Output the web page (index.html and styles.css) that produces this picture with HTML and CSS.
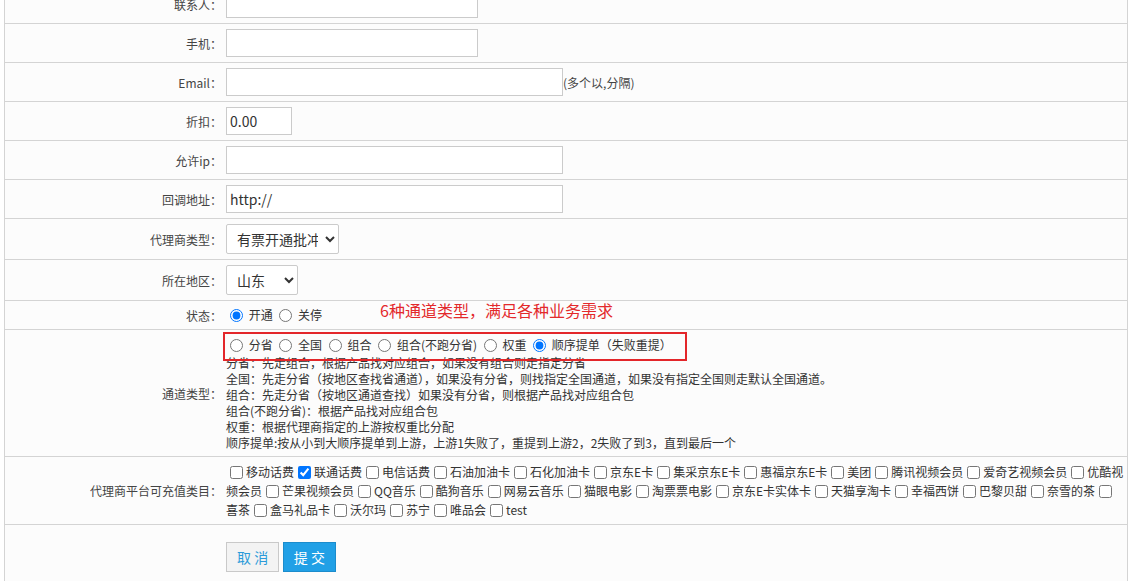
FILE: index.html
```html
<!DOCTYPE html>
<html lang="zh-CN">
<head>
  <meta charset="UTF-8" />
  <title>代理商编辑</title>
  <meta name="viewport" content="width=device-width, initial-scale=1" />
  <link rel="stylesheet" href="styles.css">
</head>
<body>

  <table class="form-table">
    <tr>
      <td class="label">联系人：</td>
      <td><input type="text" class="ipt ipt-md" /></td>
    </tr>
    <tr>
      <td class="label">手机：</td>
      <td><input type="text" class="ipt ipt-md" /></td>
    </tr>
    <tr>
      <td class="label">Email：</td>
      <td><input type="text" class="ipt ipt-lg" /><span class="tip">(多个以,分隔)</span></td>
    </tr>
    <tr>
      <td class="label">折扣：</td>
      <td><input type="text" class="ipt ipt-sm" value="0.00" /></td>
    </tr>
    <tr>
      <td class="label">允许ip：</td>
      <td><input type="text" class="ipt ipt-lg" /></td>
    </tr>
    <tr>
      <td class="label">回调地址：</td>
      <td><input type="text" class="ipt ipt-lg" value="http://" /></td>
    </tr>
    <tr>
      <td class="label">代理商类型：</td>
      <td>
        <select class="sel sel-type">
          <option>有票开通批冲</option>
          <option>无票</option>
        </select>
      </td>
    </tr>
    <tr>
      <td class="label">所在地区：</td>
      <td>
        <select class="sel sel-area">
          <option>山东</option>
          <option>北京</option>
        </select>
      </td>
    </tr>
    <tr>
      <td class="label">状态：</td>
      <td>
        <div class="status">
          <label><input type="radio" name="status" checked /> 开通</label>
          <label><input type="radio" name="status" /> 关停</label>
          <!-- 标注 -->
          <span class="note">6种通道类型，满足各种业务需求</span>
        </div>
      </td>
    </tr>
    <tr>
      <td class="label">通道类型：</td>
      <td>
        <div class="channel">
          <div class="channel-opts">
            <label><input type="radio" name="channel" /> 分省</label>
            <label><input type="radio" name="channel" /> 全国</label>
            <label><input type="radio" name="channel" /> 组合</label>
            <label><input type="radio" name="channel" /> 组合(不跑分省)</label>
            <label><input type="radio" name="channel" /> 权重</label>
            <label><input type="radio" name="channel" checked /> 顺序提单（失败重提）</label>
          </div>
          <div class="channel-desc">
            分省：先走组合，根据产品找对应组合，如果没有组合则走指定分省<br />
            全国：先走分省（按地区查找省通道），如果没有分省，则找指定全国通道，如果没有指定全国则走默认全国通道。<br />
            组合：先走分省（按地区通道查找）如果没有分省，则根据产品找对应组合包<br />
            组合(不跑分省)：根据产品找对应组合包<br />
            权重：根据代理商指定的上游按权重比分配<br />
            顺序提单:按从小到大顺序提单到上游，上游1失败了，重提到上游2，2失败了到3，直到最后一个
          </div>
          <div class="mark-box"></div>
        </div>
      </td>
    </tr>
    <tr>
      <td class="label">代理商平台可充值类目：</td>
      <td>
        <div class="cats"><input type="checkbox" />移动话费<input type="checkbox" checked />联通话费<input type="checkbox" />电信话费<input type="checkbox" />石油加油卡<input type="checkbox" />石化加油卡<input type="checkbox" />京东E卡<input type="checkbox" />集采京东E卡<input type="checkbox" />惠福京东E卡<input type="checkbox" />美团<input type="checkbox" />腾讯视频会员<input type="checkbox" />爱奇艺视频会员<input type="checkbox" />优酷视频会员<input type="checkbox" />芒果视频会员<input type="checkbox" />QQ音乐<input type="checkbox" />酷狗音乐<input type="checkbox" />网易云音乐<input type="checkbox" />猫眼电影<input type="checkbox" />淘票票电影<input type="checkbox" />京东E卡实体卡<input type="checkbox" />天猫享淘卡<input type="checkbox" />幸福西饼<input type="checkbox" />巴黎贝甜<input type="checkbox" />奈雪的茶<input type="checkbox" />喜茶<input type="checkbox" />盒马礼品卡<input type="checkbox" />沃尔玛<input type="checkbox" />苏宁<input type="checkbox" />唯品会<input type="checkbox" />test</div>
      </td>
    </tr>
    <tr>
      <td class="label"></td>
      <td class="actions">
        <button type="button" class="btn btn-cancel">取 消</button>
        <button type="submit" class="btn btn-submit">提 交</button>
      </td>
    </tr>
  </table>

</body>
</html>
```

FILE: styles.css
```css
body {
  margin: 0;
  background: #fff;
  font-family: "Noto Sans CJK SC", "Microsoft YaHei", sans-serif;
  font-size: 12px;
  color: #333;
}
.form-table {
  margin: -16px 0 0 4px;
  width: 1124px;
  border-collapse: collapse;
  border: 1px solid #d4d4d4;
  background: #fcfcfc;
}
.form-table td {
  border-bottom: 1px solid #d4d4d4;
  padding: 5px 0 5px 4px;
  vertical-align: middle;
}
.form-table td.label {
  width: 217px;
  padding: 5px 0;
  text-align: right;
  color: #444;
}
.ipt {
  box-sizing: border-box;
  height: 28px;
  border: 1px solid #cbcbcb;
  background: #fff;
  padding: 0 3px;
  font-family: "Noto Sans CJK SC", sans-serif;
  font-size: 14px;
  color: #333;
  vertical-align: middle;
  outline: none;
}
.ipt-sm { width: 66px; }
.ipt-md { width: 252px; }
.ipt-lg { width: 337px; }
.tip {
  vertical-align: middle;
  color: #444;
}
.sel {
  box-sizing: border-box;
  height: 30px;
  border: 1px solid #cbcbcb;
  border-radius: 2px;
  background: #fff;
  padding: 0 4px 0 6px;
  font-family: "Noto Sans CJK SC", sans-serif;
  font-size: 14px;
  color: #333;
}
.sel-type { width: 113px; }
.sel-area { width: 72px; }

input[type="radio"],
input[type="checkbox"] {
  width: 13px;
  height: 13px;
  margin: 0 3px 0 4px;
  vertical-align: -2px;
}

.status {
  position: relative;
  height: 18px;
  line-height: 18px;
}
.note {
  position: absolute;
  left: 154px;
  top: -8px;
  font-size: 16px;
  line-height: 24px;
  color: #e3292b;
}

.channel {
  position: relative;
}
.channel-opts {
  height: 20px;
  line-height: 20px;
}
.channel-desc {
  line-height: 16px;
}
.mark-box {
  position: absolute;
  left: -3px;
  top: -3px;
  width: 464px;
  height: 29px;
  box-sizing: border-box;
  border: 2px solid #e3262a;
}

.cats {
  line-height: 19px;
}

.actions {
  height: 50px;
  padding-top: 17px !important;
  vertical-align: top !important;
}
.btn {
  box-sizing: border-box;
  height: 30px;
  padding: 0 10px;
  margin-right: 1px;
  border: 1px solid #c9c9c9;
  font-family: "Noto Sans CJK SC", sans-serif;
  font-size: 14px;
  cursor: pointer;
}
.btn-cancel {
  background: #f3f3f3;
  color: #2b9bd9;
}
.btn-submit {
  background: #21a0e6;
  border-color: #1c8ccc;
  color: #fff;
}
```
